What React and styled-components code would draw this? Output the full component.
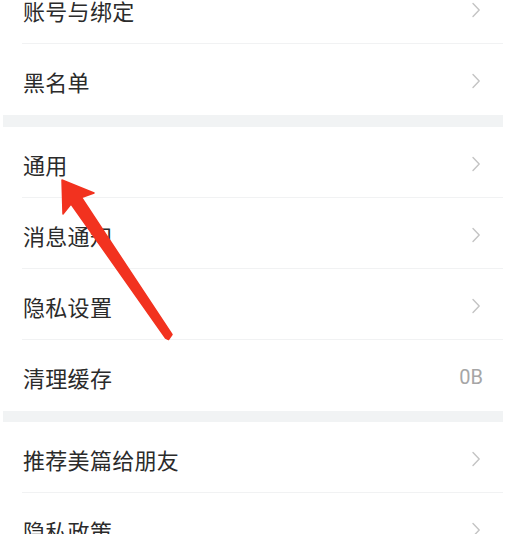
import React from "react";
import styled, { createGlobalStyle } from "styled-components";

const Global = createGlobalStyle`
  html, body { margin: 0; padding: 0; background: #ffffff; }
  body { font-family: "Noto Sans CJK SC", "Noto Sans", sans-serif; overflow: hidden; }
`;

const Screen = styled.div`
  position: relative;
  width: 522px;
  height: 534px;
  overflow: hidden;
  background: #ffffff;
`;

const List = styled.div`
  width: 500px;
  margin: -27px 0 0 3px;
  display: flex;
  flex-direction: column;
`;

const Group = styled.div`
  display: flex;
  flex-direction: column;
  background: #ffffff;
`;

const Gap = styled.div`
  height: ${(p) => p.h}px;
  background: #f1f3f4;
`;

const Row = styled.div`
  height: 71px;
  box-sizing: border-box;
  display: flex;
  align-items: center;
  padding: 2px 20px 0 20px;
  position: relative;
  &::after {
    content: "";
    display: ${(p) => (p.last ? "none" : "block")};
    position: absolute;
    left: 19px;
    right: 0;
    bottom: 0;
    height: 1px;
    background: #f1f2f3;
  }
`;

const Label = styled.span`
  flex: 1;
  font-size: 22px;
  color: #2b2b2b;
  letter-spacing: 0.3px;
`;

const Value = styled.span`
  font-family: "Roboto", "Noto Sans", sans-serif;
  font-size: 20px;
  color: #a6a6a6;
`;

const Chevron = styled.svg`
  width: 10px;
  height: 16px;
  margin-right: 2px;
`;

const Arrow = styled.svg`
  position: absolute;
  left: 0;
  top: 0;
  width: 522px;
  height: 534px;
  pointer-events: none;
`;

const ChevronIcon = () => (
  <Chevron viewBox="0 0 10 16">
    <path d="M2 1.5 L8.2 8 L2 14.5" fill="none" stroke="#c4c4c4" strokeWidth="1.4" strokeLinecap="round" strokeLinejoin="round" />
  </Chevron>
);

const groups = [
  { items: [{ t: "账号与绑定" }, { t: "黑名单" }], gap: 12 },
  {
    items: [{ t: "通用" }, { t: "消息通知" }, { t: "隐私设置" }, { t: "清理缓存", v: "0B" }],
    gap: 11,
  },
  { items: [{ t: "推荐美篇给朋友" }, { t: "隐私政策" }] },
];

export default function App() {
  return (
    <>
      <Global />
      <Screen>
        <List>
          {groups.map((g, gi) => (
            <React.Fragment key={gi}>
              <Group>
                {g.items.map((it, i) => (
                  <Row key={it.t} last={i === g.items.length - 1 && gi < groups.length - 1}>
                    <Label>{it.t}</Label>
                    {it.v ? <Value>{it.v}</Value> : <ChevronIcon />}
                  </Row>
                ))}
              </Group>
              {g.gap ? <Gap h={g.gap} /> : null}
            </React.Fragment>
          ))}
        </List>
        <Arrow viewBox="0 0 522 534">
          <polygon
            points="62,180 94,193 81.5,197.5 172,334.5 168.5,339.5 165.5,338 71,204 63,214"
            fill="#f2321f"
            stroke="#f2321f"
            strokeWidth="1.5"
            strokeLinejoin="round"
          />
        </Arrow>
      </Screen>
    </>
  );
}
